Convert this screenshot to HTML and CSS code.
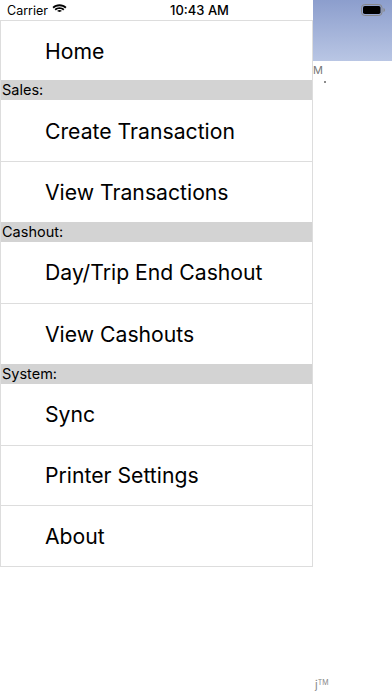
FILE: index.html
```html
<!DOCTYPE html>
<html lang="en">
<head>
    <meta charset="UTF-8">
    <meta name="viewport" content="width=device-width, initial-scale=1.0">
    <title>Menu</title>
    <link rel="stylesheet" href="styles.css">
</head>
<body>
    <div class="status-bar">
        <div class="carrier">
            Carrier
            <svg class="wifi" width="15" height="11" viewBox="0 0 15 11">
                <path d="M7.5 2.2c2.2 0 4.2.8 5.7 2.2l1.3-1.3C12.6 1.3 10.2.3 7.5.3S2.4 1.3.5 3.1l1.3 1.3C3.3 3 5.3 2.2 7.5 2.2z" fill="#000"/>
                <path d="M7.5 5.1c1.4 0 2.6.5 3.6 1.4l1.3-1.3C11.1 4 9.4 3.3 7.5 3.3S3.9 4 2.6 5.2l1.3 1.3c1-.9 2.2-1.4 3.6-1.4z" fill="#000"/>
                <path d="M7.5 8.1 5 6.9c.7-.6 1.6-.9 2.5-.9s1.8.3 2.5.9z" fill="#000"/>
            </svg>
        </div>
        <div class="clock">10:43 AM</div>
        <div class="battery">
            <svg width="25" height="12" viewBox="0 0 25 12">
                <rect x="0.5" y="0.5" width="20.5" height="11" rx="3.2" fill="none" stroke="#888"/>
                <rect x="2" y="2" width="17.5" height="8" rx="1.8" fill="#000"/>
                <path d="M22.5 4v4c.9-.3 1.4-1.1 1.4-2S23.4 4.3 22.5 4z" fill="#888"/>
            </svg>
        </div>
    </div>

    <div class="screen">
        <div class="side">
            <div class="side-top"></div>
            <div class="menu">
                <div class="item">Home</div>
                <div class="section">Sales:</div>
                <div class="item">Create Transaction</div>
                <div class="item">View Transactions</div>
                <div class="section">Cashout:</div>
                <div class="item">Day/Trip End Cashout</div>
                <div class="item">View Cashouts</div>
                <div class="section">System:</div>
                <div class="item">Sync</div>
                <div class="item">Printer Settings</div>
                <div class="item">About</div>
            </div>
        </div>

        <div class="main">
            <div class="main-header"></div>
            <div class="main-body">
                <div class="peek-text">M</div>
                <div class="peek-dot"></div>
            </div>
            <div class="peek-foot">j<sup>TM</sup></div>
        </div>
    </div>
</body>
</html>
```

FILE: styles.css
```css
* {
    margin: 0;
    padding: 0;
    box-sizing: border-box;
    font-family: Inter, 'Liberation Sans', sans-serif;
}

body {
    width: 392px;
    height: 696px;
    background: white;
    overflow: hidden;
    position: relative;
}

.status-bar {
    position: absolute;
    top: 0;
    left: 0;
    width: 392px;
    height: 20px;
    z-index: 2;
    display: flex;
    align-items: center;
    padding: 0 7px;
    font-size: 12.5px;
    color: #000;
}

.carrier {
    display: flex;
    align-items: center;
    gap: 4px;
    width: 163px;
}

.wifi {
    margin-top: -1px;
}

.clock {
    font-weight: 500;
    font-size: 13px;
}

.battery {
    display: flex;
    margin-left: auto;
    margin-right: -1px;
}

.screen {
    display: flex;
    height: 100%;
}

.side {
    width: 313px;
    flex-shrink: 0;
}

.side-top {
    height: 20px;
}

.menu {
    border: 1px solid #dddddd;
    border-right-width: 1.5px;
}

.item {
    height: 60.75px;
    display: flex;
    align-items: center;
    padding-left: 44px;
    font-size: 21.2px;
    color: #000;
    background: white;
}

.item + .item {
    border-top: 1px solid #dddddd;
}

.menu > .item:first-child {
    height: 59px;
}

.section {
    height: 20.25px;
    background: #d3d3d3;
    font-size: 14.5px;
    line-height: 20.25px;
    padding-left: 1px;
    color: #000;
}

.main {
    flex: 1;
    position: relative;
}

.main-header {
    height: 61px;
    background: linear-gradient(to bottom, #8c9ecd, #b9c6e4);
}

.main-body {
    padding-top: 3px;
}

.peek-text {
    font-size: 11px;
    color: #777;
    line-height: 12px;
}

.peek-dot {
    width: 2px;
    height: 2px;
    border-radius: 50%;
    background: #666;
    margin: 5px 0 0 11px;
}

.peek-foot {
    position: absolute;
    left: 2px;
    top: 678px;
    font-size: 11px;
    color: #888;
}

.peek-foot sup {
    font-size: 7px;
    vertical-align: 4px;
}
```
